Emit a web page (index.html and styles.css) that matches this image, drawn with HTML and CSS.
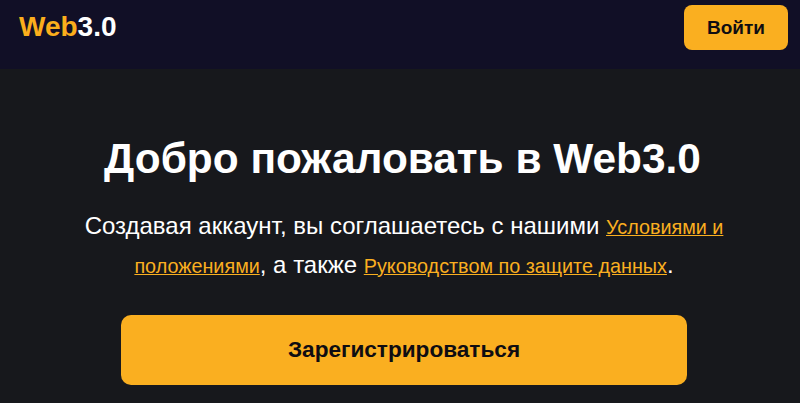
FILE: index.html
```html
<!DOCTYPE html>
<html lang="ru">
<head>
<meta charset="utf-8">
<title>Web3.0</title>
<link rel="stylesheet" href="styles.css">
</head>
<body>
<header class="topbar">
  <a class="logo" href="#"><span class="logo-accent">Web</span>3.0</a>
  <button class="btn btn-login">Войти</button>
</header>
<main class="welcome">
  <h1 class="welcome-title">Добро пожаловать в Web3.0</h1>
  <p class="welcome-text">Создавая аккаунт, вы соглашаетесь с нашими <a href="#">Условиями и положениями</a>, а также <a href="#">Руководством по защите данных</a>.</p>
  <button class="btn btn-register">Зарегистрироваться</button>
</main>
</body>
</html>
```
FILE: styles.css
```css
* { box-sizing: border-box; }
html, body { margin: 0; height: 100%; }
body {
  background: #17181c;
  color: #fff;
  font-family: "Liberation Sans", Arial, sans-serif;
  overflow: hidden;
}
.topbar {
  height: 69px;
  background: #110f26;
  display: flex;
  justify-content: space-between;
  align-items: flex-start;
  padding: 5px 12px 0 19px;
}
.logo {
  font-size: 28px;
  font-weight: 700;
  line-height: 32px;
  margin-top: 6px;
  color: #fff;
  text-decoration: none;
}
.logo-accent { color: #fbae1c; }
.btn {
  background: #faaf20;
  border: 0;
  color: #0f0d12;
  font-family: inherit;
  font-weight: 700;
}
.btn-login {
  width: 104px;
  height: 45px;
  border-radius: 8px;
  font-size: 19px;
}
.welcome {
  display: flex;
  flex-direction: column;
  align-items: center;
  padding: 66px 0 0 8px;
}
.welcome-title {
  margin: 0 0 0 -3px;
  font-size: 42.4px;
  line-height: 48px;
  font-weight: 700;
  text-align: center;
}
.welcome-text {
  margin: 24px 0 0;
  width: 680px;
  font-size: 24px;
  line-height: 38.5px;
  text-align: center;
}
.welcome-text a {
  color: #faaf20;
  font-size: 19.8px;
  line-height: 1;
}
.btn-register {
  width: 566px;
  height: 70px;
  margin-top: 31px;
  border-radius: 10px;
  font-size: 22.6px;
}
```
